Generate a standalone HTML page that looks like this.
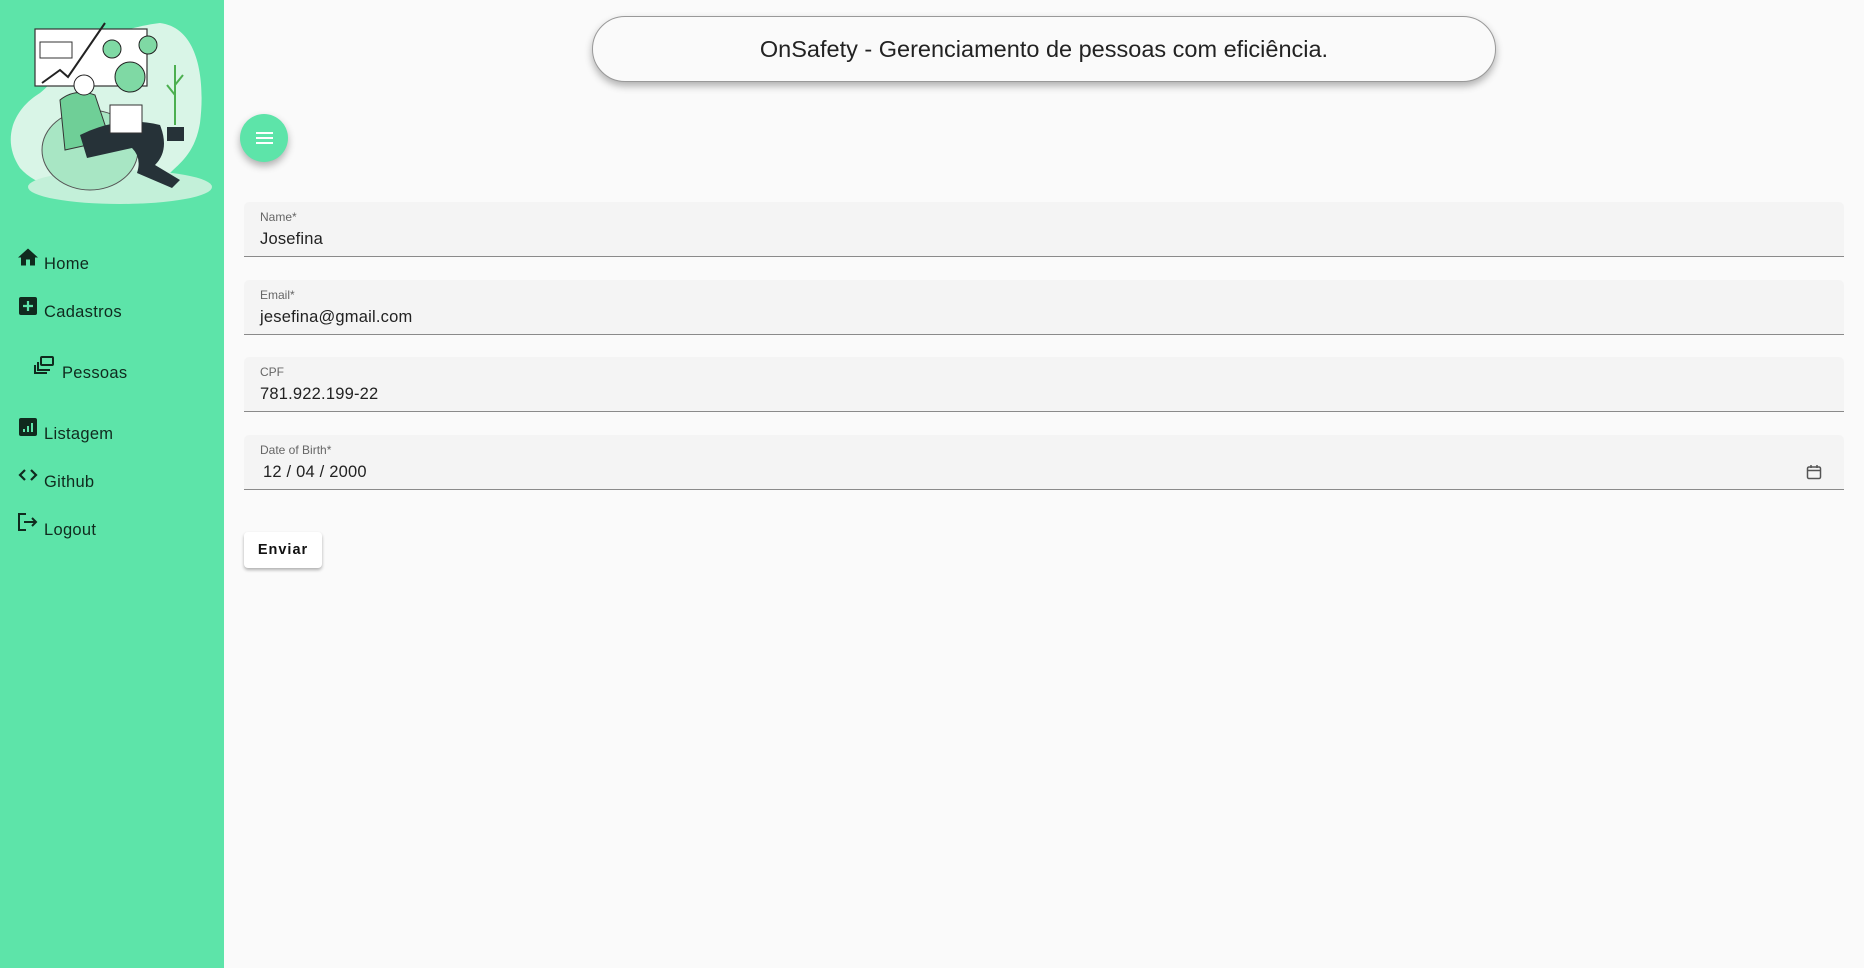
<!DOCTYPE html>
<html><head><meta charset="utf-8"><style>
*{box-sizing:border-box;margin:0;padding:0}
body{width:1864px;height:968px;background:#fafafa;font-family:"Liberation Sans",sans-serif;position:relative;overflow:hidden;color:#212121}
.side{position:absolute;left:0;top:0;width:224px;height:968px;background:#5de4a9}
.nav{position:absolute;font-size:16.5px;color:#102a1e;letter-spacing:.3px}
.ic{position:absolute}
.pill{position:absolute;left:592px;top:16px;width:904px;height:66px;border-radius:33px;border:1px solid #999;background:#fafafa;box-shadow:0 4px 8px rgba(0,0,0,.3);text-align:center;line-height:64px;font-size:23.5px;color:#222}
.fab{position:absolute;left:240px;top:114px;width:48px;height:48px;border-radius:50%;background:#5de4a9;box-shadow:0 4px 8px rgba(0,0,0,.3)}
.fab i{position:absolute;left:16px;width:17px;height:2px;background:#fff}
.f{position:absolute;left:244px;width:1600px;height:55px;background:#f4f4f4;border-radius:5px 5px 0 0;border-bottom:1.5px solid #8a8a8a}
.f .l{position:absolute;left:16px;top:8px;font-size:12px;color:#666}
.f .v{position:absolute;left:16px;top:28px;font-size:16.5px;color:#222;letter-spacing:.2px}
.btn{position:absolute;left:244px;top:532px;width:78px;height:36px;background:#fff;border-radius:4px;box-shadow:0 2px 3px rgba(0,0,0,.3);font-size:14.5px;font-weight:bold;text-align:center;line-height:36px;letter-spacing:1px;color:#111}
</style></head><body>
<div class="side">
<svg style="position:absolute;left:10px;top:15px" width="205" height="200" viewBox="0 0 205 200">
<path d="M150 8c40 5 45 60 40 100 -5 30 -20 40 -30 50 -20 30 -120 30 -150 -5 -20 -30 -5 -60 20 -75 20 -15 40 -60 120 -70z" fill="#d9f5e7"/>
<ellipse cx="110" cy="172" rx="92" ry="17" fill="#c3f0d9"/>
<rect x="25" y="14" width="112" height="57" fill="#fff" stroke="#333" stroke-width="1.2"/>
<rect x="30" y="27" width="32" height="16" fill="#fff" stroke="#333"/>
<path d="M32 68 L50 55 L58 62 L95 8" stroke="#222" stroke-width="2" fill="none"/>
<circle cx="102" cy="34" r="9" fill="#7fd9a4" stroke="#222"/>
<circle cx="138" cy="30" r="9" fill="#7fd9a4" stroke="#222"/>
<circle cx="120" cy="62" r="15" fill="#7fd9a4" stroke="#222"/>
<ellipse cx="80" cy="135" rx="48" ry="40" fill="#a8e6c4" stroke="#555"/>
<path d="M50 85 q15 -12 35 -5 l15 45 l-45 10z" fill="#6fcf97" stroke="#333"/>
<circle cx="74" cy="70" r="10" fill="#fff" stroke="#222"/>
<path d="M70 120 q40 -20 80 -10 q10 25 -5 40 l25 15 l-8 8 l-35 -15 q5 -15 -5 -25 l-45 10z" fill="#263238"/>
<rect x="100" y="90" width="32" height="28" fill="#fff" stroke="#333"/>
<path d="M165 110 l0 -60 M165 80 l-8 -10 M165 70 l8 -10" stroke="#4caf50" stroke-width="2" fill="none"/>
<rect x="157" y="112" width="17" height="14" fill="#263238"/>
</svg>
<svg class="ic" style="left:18px;top:248px" width="20" height="18" viewBox="0 0 20 17"><path d="M8 17v-6h4v6h5V9h3L10 0 0 9h3v8z" fill="#102a1e"/></svg>
<div class="nav" style="left:44px;top:255px">Home</div>
<svg class="ic" style="left:19px;top:297px" width="18" height="18" viewBox="0 0 18 18"><rect width="18" height="18" rx="2" fill="#102a1e"/><path d="M9 4v10M4 9h10" stroke="#5de4a9" stroke-width="2.2"/></svg>
<div class="nav" style="left:44px;top:303px">Cadastros</div>
<svg class="ic" style="left:34px;top:356px" width="20" height="18" viewBox="0 0 20 18"><rect x="7" y="1" width="12" height="8" rx="1" fill="none" stroke="#102a1e" stroke-width="2"/><path d="M4 6v8h12M1 9v8h12" stroke="#102a1e" stroke-width="2" fill="none"/></svg>
<div class="nav" style="left:62px;top:364px">Pessoas</div>
<svg class="ic" style="left:19px;top:418px" width="18" height="18" viewBox="0 0 18 18"><rect width="18" height="18" rx="2" fill="#102a1e"/><path d="M5 14v-3M9 14V8M13 14V5" stroke="#5de4a9" stroke-width="2"/></svg>
<div class="nav" style="left:44px;top:425px">Listagem</div>
<svg class="ic" style="left:18px;top:468px" width="20" height="14" viewBox="0 0 20 14"><path d="M7 2L2 7l5 5M13 2l5 5-5 5" stroke="#102a1e" stroke-width="2.2" fill="none"/></svg>
<div class="nav" style="left:44px;top:473px">Github</div>
<svg class="ic" style="left:18px;top:513px" width="20" height="18" viewBox="0 0 20 18"><path d="M8 1H1v16h7" stroke="#102a1e" stroke-width="2" fill="none"/><path d="M6 9h12M14 5l4 4-4 4" stroke="#102a1e" stroke-width="2" fill="none"/></svg>
<div class="nav" style="left:44px;top:521px">Logout</div>
</div>
<div class="pill">OnSafety - Gerenciamento de pessoas com eficiência.</div>
<div class="fab"><i style="top:18px"></i><i style="top:23px"></i><i style="top:28px"></i></div>
<div class="f" style="top:202px"><div class="l">Name*</div><div class="v">Josefina</div></div>
<div class="f" style="top:280px"><div class="l">Email*</div><div class="v">jesefina@gmail.com</div></div>
<div class="f" style="top:357px"><div class="l">CPF</div><div class="v">781.922.199-22</div></div>
<div class="f" style="top:435px"><div class="l">Date of Birth*</div><div class="v" style="left:19px;top:28px">12 / 04 / 2000</div>
<svg style="position:absolute;left:1562px;top:29px" width="16" height="16" viewBox="0 0 16 16"><rect x="1.5" y="3" width="13" height="11.5" rx="1.5" fill="none" stroke="#555" stroke-width="1.5"/><path d="M1.5 6.5h13M5 1v3M11 1v3" stroke="#555" stroke-width="1.5"/></svg></div>
<div class="btn">Enviar</div>
</body></html>
